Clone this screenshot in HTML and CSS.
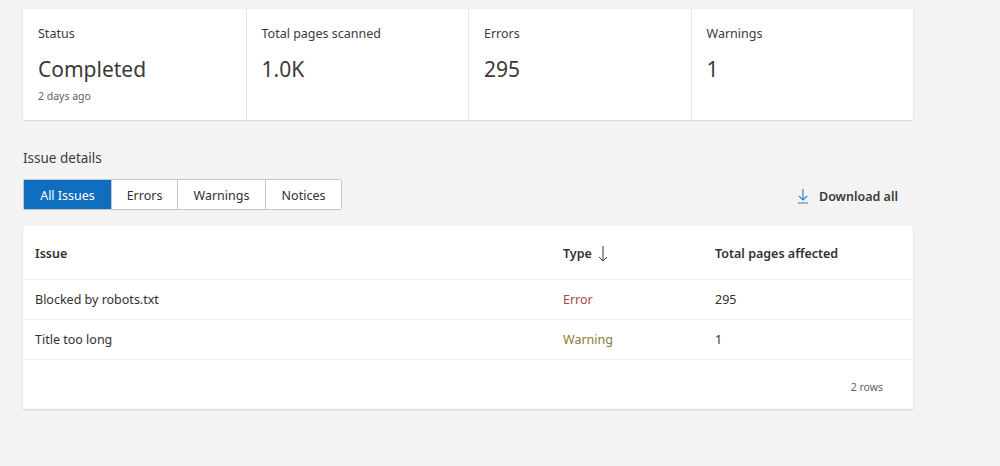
FILE: index.html
```html
<!DOCTYPE html>
<html>
<head>
<meta charset="utf-8">
<link rel="stylesheet" href="styles.css">
</head>
<body>
<div class="page">
  <div class="card summary">
    <div class="stat">
      <div class="label">Status</div>
      <div class="value">Completed</div>
      <div class="sub">2 days ago</div>
    </div>
    <div class="stat">
      <div class="label">Total pages scanned</div>
      <div class="value">1.0K</div>
    </div>
    <div class="stat">
      <div class="label">Errors</div>
      <div class="value">295</div>
    </div>
    <div class="stat">
      <div class="label">Warnings</div>
      <div class="value">1</div>
    </div>
  </div>

  <h2 class="section-title">Issue details</h2>

  <div class="toolbar">
    <div class="tabs">
      <button class="tab active">All Issues</button>
      <button class="tab">Errors</button>
      <button class="tab">Warnings</button>
      <button class="tab">Notices</button>
    </div>
    <button class="download">
      <svg class="dl-icon" width="12" height="16" viewBox="0 0 12 16" fill="none" stroke="#2b7cd3" stroke-width="1.1">
        <path d="M6 1v11M1.8 7.8L6 12l4.2-4.2M1 15h10"/>
      </svg>
      <span>Download all</span>
    </button>
  </div>

  <div class="card table">
    <div class="row head">
      <div class="c1">Issue</div>
      <div class="c2">Type
        <svg class="arrow" width="10" height="17" viewBox="0 0 10 17" fill="none" stroke="#3b3a39" stroke-width="1">
          <path d="M5 1v15M1 12l4 4 4-4"/>
        </svg>
      </div>
      <div class="c3">Total pages affected</div>
    </div>
    <div class="row">
      <div class="c1">Blocked by robots.txt</div>
      <div class="c2 err">Error</div>
      <div class="c3">295</div>
    </div>
    <div class="row">
      <div class="c1">Title too long</div>
      <div class="c2 warn">Warning</div>
      <div class="c3">1</div>
    </div>
    <div class="foot">2 rows</div>
  </div>
</div>
</body>
</html>
```

FILE: styles.css
```css
* { box-sizing: border-box; }
html, body { margin: 0; padding: 0; }
body {
  background: #f3f3f3;
  font-family: "Noto Sans", "Open Sans", sans-serif;
  color: #323130;
  width: 1000px;
  height: 466px;
  overflow: hidden;
}
.page {
  padding: 9px 0 0 23px;
  width: 913px;
}
.card {
  background: #fff;
  border-radius: 2px;
  box-shadow: 0 1px 2px rgba(0,0,0,0.13), 0 0 1px rgba(0,0,0,0.1);
}
.summary {
  display: grid;
  grid-template-columns: repeat(4, 1fr);
  height: 111px;
}
.stat {
  padding: 16px 15px 0;
  border-left: 1px solid #e6e6e6;
}
.stat:first-child { border-left: none; }
.label {
  font-size: 12.5px;
  line-height: 17px;
  color: #3b3a39;
}
.value {
  font-size: 21px;
  line-height: 28px;
  margin-top: 13px;
  color: #3b3a39;
}
.sub {
  font-size: 10.5px;
  line-height: 14px;
  margin-top: 6px;
  color: #605e5c;
}
.section-title {
  font-size: 13.5px;
  font-weight: normal;
  margin: 28px 0 0;
  line-height: 20px;
  color: #3b3a39;
}
.toolbar {
  display: flex;
  justify-content: space-between;
  align-items: center;
  margin-top: 11px;
}
.tabs {
  display: flex;
  border: 1px solid #c8c6c4;
  border-radius: 2px;
  height: 31px;
}
.tab {
  font-family: inherit;
  font-size: 12.5px;
  background: #fff;
  color: #323130;
  border: none;
  border-left: 1px solid #c8c6c4;
  padding: 1px 0 0;
  height: 29px;
}
.tab:nth-child(1) { width: 87px; border-left: none; background: #106ebe; color: #fff; }
.tab:nth-child(2) { width: 66px; }
.tab:nth-child(3) { width: 88px; }
.tab:nth-child(4) { width: 76px; }
.download {
  display: flex;
  align-items: center;
  gap: 10px;
  background: none;
  border: none;
  font-family: inherit;
  font-size: 12.5px;
  font-weight: 600;
  color: #3b3a39;
  padding: 0;
  margin-right: 15px;
  margin-top: 3px;
}
.table {
  margin-top: 16px;
}
.row {
  display: flex;
  height: 40px;
  align-items: center;
  border-top: 1px solid #efefef;
  font-size: 12.5px;
  padding-left: 12px;
}
.row.head {
  height: 53px;
  border-top: none;
  font-weight: 600;
  padding-top: 2px;
}
.c1 { width: 528px; }
.c2 { width: 152px; display: flex; align-items: center; }
.c3 { flex: 1; }
.arrow { margin-left: 6px; }
.err { color: #a4484a; }
.warn { color: #8a7a34; }
.foot {
  border-top: 1px solid #efefef;
  height: 50px;
  display: flex;
  align-items: center;
  justify-content: flex-end;
  padding-right: 30px;
  padding-top: 4px;
  font-size: 10.5px;
  color: #605e5c;
}
```
